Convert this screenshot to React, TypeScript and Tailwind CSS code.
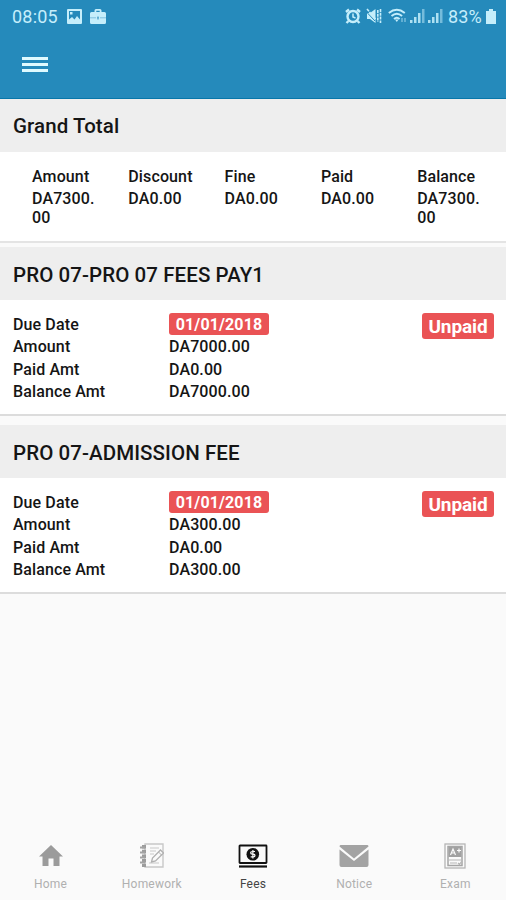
import React from 'react';

interface Fee {
  title: string;
  dueDate: string;
  amount: string;
  paid: string;
  balance: string;
}

const totals = [
  { label: 'Amount', value: 'DA7300.00' },
  { label: 'Discount', value: 'DA0.00' },
  { label: 'Fine', value: 'DA0.00' },
  { label: 'Paid', value: 'DA0.00' },
  { label: 'Balance', value: 'DA7300.00' },
];

const fees: Fee[] = [
  { title: 'PRO 07-PRO 07 FEES PAY1', dueDate: '01/01/2018', amount: 'DA7000.00', paid: 'DA0.00', balance: 'DA7000.00' },
  { title: 'PRO 07-ADMISSION FEE', dueDate: '01/01/2018', amount: 'DA300.00', paid: 'DA0.00', balance: 'DA300.00' },
];

const SignalIcon = () => (
  <svg width="15" height="16" viewBox="0 0 15 16" fill="currentColor">
    <path d="M0 12h2.500v3H0zM4 9h2.500v6H4zM8 5h2.500v10H8z" opacity="0.85" />
    <path d="M12 1h2.500v14H12z" opacity="0.5" />
  </svg>
);

const StatusBar = () => (
  <div className="flex h-8 items-center justify-between pl-3 pr-[10px] text-[18px] text-[#c5eefb]">
    <div className="flex items-center">
      <span className="w-[55px] tracking-[0.2px]">08:05</span>
      <svg width="15" height="15" viewBox="0 0 15 15" fill="currentColor">
        <path fillRule="evenodd" d="M1 0h13q1 0 1 1v13q0 1-1 1H1q-1 0-1-1V1q0-1 1-1zM2 2v8.500l3-2.500 2.500 2.500 2.500-3.500 3 3.500V2zM3 3h2.500v2.500H3z" />
      </svg>
      <svg className="ml-2" width="16" height="15" viewBox="0 0 16 15" fill="currentColor">
        <path fillRule="evenodd" d="M4.500 3V1.500Q4.500 0 6 0h4q1.500 0 1.500 1.500V3h3Q16 3 16 4.500v9q0 1.500-1.500 1.500h-13Q0 15 0 13.500v-9Q0 3 1.500 3zM6.300 1.800V3h3.400V1.800z" />
        <path d="M0 8.800h6M10 8.800h6M7 8.800h2" stroke="#258abb" strokeWidth="0.700" opacity="0.6" />
        <path d="M7.200 7.500h1.600v3H7.200z" fill="#258abb" opacity="0.6" />
      </svg>
    </div>
    <div className="flex items-center">
      <svg width="16" height="16" viewBox="0 0 16 16" fill="none" stroke="currentColor" strokeWidth="2.400">
        <circle cx="8" cy="8.500" r="5.500" />
        <path d="M1 4l3-2.500M15 4l-3-2.500M3.500 13l-2 2M12.500 13l2 2" />
        <path d="M8 5.500V9l2.500 1" strokeWidth="1.500" />
      </svg>
      <svg className="ml-[5px]" width="16" height="16" viewBox="0 0 16 16" fill="currentColor">
        <path d="M1 5h3l5.500-4v14L4 11H1z" />
        <path d="M0 3.500l9 9.500" stroke="#258abb" strokeWidth="1" />
        <path d="M1 1l8.500 10M11.800 2v12M14.500 1v14" fill="none" stroke="currentColor" strokeWidth="1.600" strokeDasharray="3 0.800" />
      </svg>
      <svg className="ml-[6px]" width="19" height="16" viewBox="0 0 19 16" fill="none" stroke="currentColor" strokeWidth="1.900">
        <path d="M.8 5q8-6.500 16 0M3.500 8q5.300-4.500 10.600 0M6 11q2.800-2.500 5.600 0" />
        <path d="M7 11.500h3.500L8.800 14z" fill="currentColor" stroke="none" />
        <path d="M14 10v4M17 10v4" opacity="0.4" />
      </svg>
      <span className="ml-[3px]"><SignalIcon /></span>
      <span className="ml-[3px]"><SignalIcon /></span>
      <span className="ml-[5px] w-[36px] whitespace-nowrap text-[18px] tracking-[0.1px]">83%</span>
      <svg className="ml-[2px]" width="10" height="15" viewBox="0 0 10 15" fill="currentColor">
        <path d="M3 0h4v2h3v13H0V2h3z" />
      </svg>
    </div>
  </div>
);

const Header = () => (
  <header className="h-[99px] shrink-0 border-b border-[#0877aa] bg-[#258abb]">
    <StatusBar />
    <button aria-label="Menu" className="ml-[22px] mt-[25px] flex w-[26px] flex-col gap-[3px]">
      <span className="h-[3px] w-full bg-[#dffaff]" />
      <span className="h-[3px] w-full bg-[#dffaff]" />
      <span className="h-[3px] w-full bg-[#dffaff]" />
    </button>
  </header>
);

const FeeCard: React.FC<{ fee: Fee }> = ({ fee }) => {
  const rows = [
    { label: 'Amount', value: fee.amount },
    { label: 'Paid Amt', value: fee.paid },
    { label: 'Balance Amt', value: fee.balance },
  ];

  return (
    <section className="h-[169px] border-b-2 border-[#dcdcdc] bg-white">
      <h2 className="flex h-[53px] items-center bg-[#eeeeee] pl-[13px] pt-[3px] text-[20.5px] font-medium tracking-[0.08px]">
        {fee.title}
      </h2>
      <div className="flex justify-between pl-[13px] pr-3 pt-[13px] text-[16px] font-medium tracking-[0.12px]">
        <div>
          <div className="flex h-[23px] items-start leading-[23px]">
            <span className="w-[156px]">Due Date</span>
            <span className="flex h-[22px] w-[100px] items-center justify-center rounded-[3px] bg-[#ea5355] pt-px font-bold text-white">
              {fee.dueDate}
            </span>
          </div>
          {rows.map((row) => (
            <div key={row.label} className="flex h-[22.5px] items-center">
              <span className="w-[156px]">{row.label}</span>
              <span>{row.value}</span>
            </div>
          ))}
        </div>
        <span className="flex h-[26px] w-[72px] items-center justify-center rounded-[3px] bg-[#ea5355] pt-[2px] text-[19px] font-bold tracking-[-0.1px] text-white">
          Unpaid
        </span>
      </div>
    </section>
  );
};

const HomeIcon = () => (
  <svg width="24" height="22" viewBox="0 0 24 22" fill="#9b9b9b">
    <path d="M12 0l12 11.500h-3.500V21h-6v-7.500h-5V21h-6v-9.500H0z" />
  </svg>
);

const HomeworkIcon = () => (
  <svg width="24" height="26" viewBox="0 0 24 26" fill="none" stroke="#c8c8c8">
    <path d="M5 1h18v23H5z" strokeWidth="1.400" />
    <path d="M4 2v22" stroke="#9c9c9c" strokeWidth="4" strokeDasharray="3.500 1.200" />
    <path d="M0 4.500h5M0 9.500h5M0 14.500h5M0 19.500h5" stroke="#a3a3a3" strokeWidth="2" />
    <path d="M10 5h9M10 8h6M10 11h4M9 20h10" />
    <path d="M11.500 19l1-4 8-8 3 3-8 8z" fill="#fafafa" stroke="#b0b0b0" strokeWidth="1.300" />
    <path d="M18.500 9l3 3" stroke="#b0b0b0" />
  </svg>
);

const FeesIcon = () => (
  <svg width="30" height="24" viewBox="0 0 30 24" fill="none" stroke="#111">
    <rect x="1.500" y="1.500" width="27" height="17.500" rx="0.500" strokeWidth="1.800" />
    <path d="M1 22.500h28" strokeWidth="2.200" />
    <circle cx="14.800" cy="10.300" r="6.300" fill="#111" stroke="none" />
    <path d="M17 7.500h-2.700c-2.200 0-2.200 2.600 0 2.600h1c2.200 0 2.200 2.800 0 2.800h-2.600M14.900 6v8.500" stroke="#fafafa" strokeWidth="1.200" />
  </svg>
);

const NoticeIcon = () => (
  <svg width="30" height="24" viewBox="0 0 30 24" fill="#a3a3a3">
    <path d="M1.500 1h27q1 0 1 1.500L15 14.500.5 2.500Q.5 1 1.500 1z" />
    <path d="M.5 5.500L15 17 29.500 5.500V21q0 2-2 2h-25q-2 0-2-2z" />
  </svg>
);

const ExamIcon = () => (
  <svg width="22" height="26" viewBox="0 0 22 26" fill="none" stroke="#b5b5b5">
    <rect x="1" y="1" width="20" height="24" strokeWidth="1.300" />
    <rect x="4" y="3.500" width="14" height="19" stroke="#a5a5a5" strokeWidth="1.500" />
    <path d="M4.500 4h13v10h-13z" fill="#a1a1a1" stroke="none" />
    <path d="M6.500 12l2.500-6 2.500 6M7.500 10h3M13 7.500h4M15 5.500v4" stroke="#fafafa" strokeWidth="1.200" />
    <path d="M5 17h12M6 20h7M14 20l1.500 1.500 2-3" strokeWidth="1.200" />
  </svg>
);

const tabs = [
  { label: 'Home', icon: <HomeIcon /> },
  { label: 'Homework', icon: <HomeworkIcon /> },
  { label: 'Fees', icon: <FeesIcon />, active: true },
  { label: 'Notice', icon: <NoticeIcon /> },
  { label: 'Exam', icon: <ExamIcon /> },
];

const App: React.FC = () => {
  return (
    <div className="flex h-[900px] w-[506px] flex-col overflow-hidden bg-[#fafafa] font-['Roboto',sans-serif] text-[#151515]">
      <Header />
      <main className="flex flex-1 flex-col">
        <section className="h-[144px] border-b-2 border-[#e4e4e4] bg-white">
          <h2 className="flex h-[53px] items-center bg-[#eeeeee] pl-[13px] pt-[2px] text-[20.5px] font-medium tracking-[0.08px]">
            Grand Total
          </h2>
          <div className="grid grid-cols-[repeat(5,96.300px)] pl-8 pt-[15px] text-[16px] font-medium tracking-[0.12px]">
            {totals.map((total) => (
              <div key={total.label}>
                <div className="h-[22px] leading-[19px]">{total.label}</div>
                <div className="w-[66px] break-all leading-[19px]">{total.value}</div>
              </div>
            ))}
          </div>
        </section>
        <div className="mt-[4px] flex flex-col gap-[9px]">
          {fees.map((fee) => (
            <FeeCard key={fee.title} fee={fee} />
          ))}
        </div>
      </main>
      <nav className="grid h-[62px] shrink-0 grid-cols-5">
        {tabs.map((tab) => (
          <div
            key={tab.label}
            className={`flex flex-col items-center text-[12px] tracking-[0.2px] ${tab.active ? 'text-[#444]' : 'text-[#b0b0b0]'}`}
          >
            <div className="flex h-[36px] items-center">{tab.icon}</div>
            <span className="leading-[20px]">{tab.label}</span>
          </div>
        ))}
      </nav>
    </div>
  );
};

export default App;
